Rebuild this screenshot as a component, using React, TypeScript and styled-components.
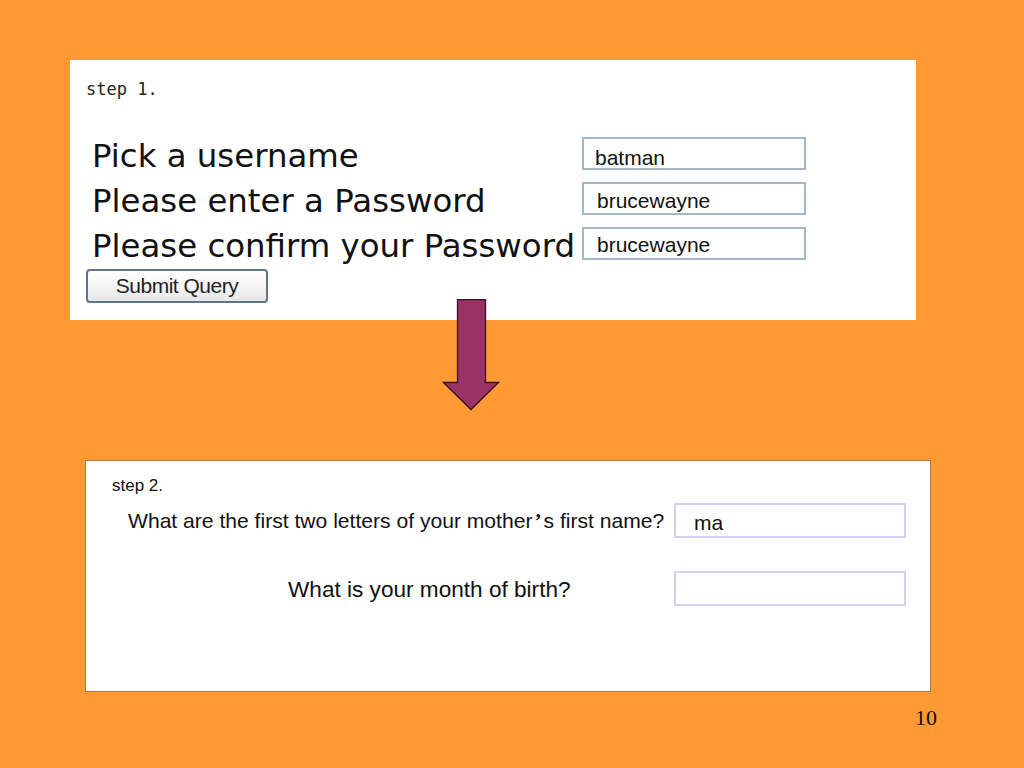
import styled, { createGlobalStyle } from "styled-components";

const GlobalStyle = createGlobalStyle`
  html, body {
    margin: 0;
    padding: 0;
    background: #ff9933;
  }
`;

const Slide = styled.div`
  width: 1024px;
  height: 768px;
  background: #ff9933;
  display: flex;
  flex-direction: column;
  box-sizing: border-box;
  padding-top: 60px;
  position: relative;
`;

const StepOnePanel = styled.div`
  margin-left: 70px;
  width: 846px;
  height: 260px;
  background: #ffffff;
  box-sizing: border-box;
  padding: 0 0 0 16px;
  display: flex;
  flex-direction: column;
`;

const StepOneTitle = styled.div`
  font-family: "DejaVu Sans Mono", monospace;
  font-size: 17px;
  color: #222;
  margin-top: 19px;
  height: 20px;
  line-height: 20px;
`;

const FormGrid = styled.div`
  display: grid;
  grid-template-columns: 496px 224px;
  grid-auto-rows: 45px;
  margin-top: 32px;
  align-items: center;
`;

const BigLabel = styled.div`
  font-family: "DejaVu Sans", Verdana, sans-serif;
  font-size: 32.4px;
  color: #111;
  padding-left: 6px;
  padding-top: 5px;
  white-space: nowrap;
`;

const TextBox = styled.div<{ $indent?: number; $drop?: number }>`
  height: 33px;
  box-sizing: border-box;
  border: 2px solid #a3b7cb;
  background: #fff;
  font-family: "Liberation Sans", Arial, sans-serif;
  font-size: 21px;
  color: #111;
  display: flex;
  align-items: center;
  padding-left: ${({ $indent }) => $indent ?? 11}px;
  padding-top: ${({ $drop }) => $drop ?? 8}px;
`;

const SubmitButton = styled.div`
  margin-top: 3px;
  width: 182px;
  height: 34px;
  box-sizing: border-box;
  border: 2px solid #5f738b;
  border-radius: 4px;
  background: linear-gradient(#ffffff 0%, #f6f6f6 45%, #e6e6e6 100%);
  font-family: "Liberation Sans", Arial, sans-serif;
  font-size: 21px;
  letter-spacing: -0.5px;
  color: #222;
  display: flex;
  align-items: center;
  justify-content: center;
`;

const ArrowWrap = styled.div`
  margin-left: 442px;
  margin-top: -21px;
  width: 58px;
  height: 112px;
`;

const StepTwoPanel = styled.div`
  margin-left: 85px;
  margin-top: 49px;
  width: 846px;
  height: 232px;
  background: #ffffff;
  box-sizing: border-box;
  border: 1px solid #b77a3c;
  display: flex;
  flex-direction: column;
  padding-left: 26px;
`;

const StepTwoTitle = styled.div`
  font-family: "Liberation Sans", Arial, sans-serif;
  font-size: 17px;
  color: #111;
  margin-top: 15px;
  line-height: 20px;
`;

const QuestionRow = styled.div<{ $gap: number }>`
  display: flex;
  align-items: center;
  margin-top: ${({ $gap }) => $gap}px;
  height: 35px;
`;

const Question = styled.div<{ $width: number; $indent: number; $size: number }>`
  width: ${({ $width }) => $width}px;
  padding-left: ${({ $indent }) => $indent}px;
  padding-top: 2px;
  box-sizing: border-box;
  font-family: "Liberation Sans", Arial, sans-serif;
  font-size: ${({ $size }) => $size}px;
  color: #111;
  white-space: nowrap;
`;

const Apostrophe = styled.span`
  font-family: "Liberation Serif", "Times New Roman", serif;
  font-weight: bold;
  margin: 0 2px;
`;

const AnswerBox = styled.div`
  width: 232px;
  height: 35px;
  box-sizing: border-box;
  border: 2px solid #d0d0f2;
  font-family: "Liberation Sans", Arial, sans-serif;
  font-size: 21px;
  color: #111;
  display: flex;
  align-items: center;
  padding-left: 18px;
  padding-top: 4px;
`;

const PageNumber = styled.div`
  position: absolute;
  left: 915px;
  top: 705px;
  font-family: "Liberation Serif", "Times New Roman", serif;
  font-size: 22px;
  color: #111;
`;

const DownArrow = () => (
  <svg width="58" height="112" viewBox="0 0 58 112">
    <path
      d="M15.5 0.5 H43.5 V83.5 H56.5 L29 110.5 L1.5 83.5 H15.5 Z"
      fill="#993366"
      stroke="#3a1020"
      strokeWidth="1.3"
    />
  </svg>
);

export default function App() {
  return (
    <>
      <GlobalStyle />
      <Slide>
        <StepOnePanel>
          <StepOneTitle>step 1.</StepOneTitle>
          <FormGrid>
            <BigLabel>Pick a username</BigLabel>
            <TextBox>batman</TextBox>
            <BigLabel>Please enter a Password</BigLabel>
            <TextBox $indent={13} $drop={5}>brucewayne</TextBox>
            <BigLabel>Please confirm your Password</BigLabel>
            <TextBox $indent={13} $drop={3}>brucewayne</TextBox>
          </FormGrid>
          <SubmitButton>Submit Query</SubmitButton>
        </StepOnePanel>
        <ArrowWrap>
          <DownArrow />
        </ArrowWrap>
        <StepTwoPanel>
          <StepTwoTitle>step 2.</StepTwoTitle>
          <QuestionRow $gap={7}>
            <Question $width={562} $indent={16} $size={21.1}>
              What are the first two letters of your mother<Apostrophe>’</Apostrophe>s first name?
            </Question>
            <AnswerBox>ma</AnswerBox>
          </QuestionRow>
          <QuestionRow $gap={33}>
            <Question $width={562} $indent={176} $size={22.6}>
              What is your month of birth?
            </Question>
            <AnswerBox />
          </QuestionRow>
        </StepTwoPanel>
        <PageNumber>10</PageNumber>
      </Slide>
    </>
  );
}
